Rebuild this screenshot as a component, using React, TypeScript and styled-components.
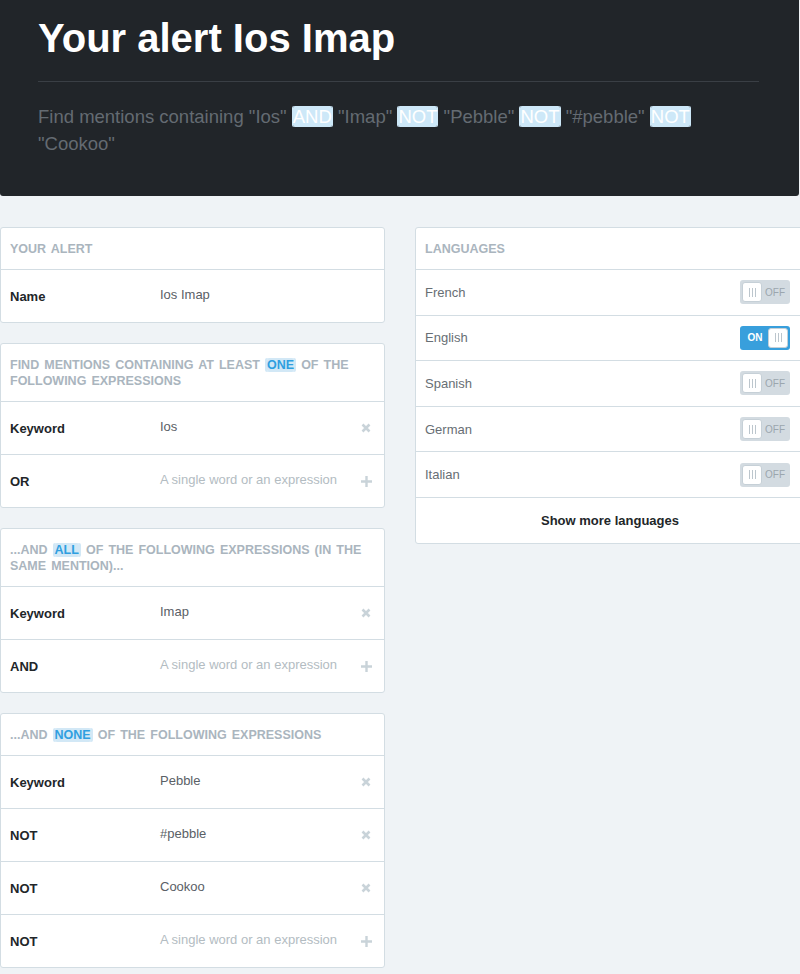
import React from "react";
import styled, { createGlobalStyle } from "styled-components";

const Global = createGlobalStyle`
  html, body { margin: 0; padding: 0; background: #eff3f6; }
  body { font-family: "Liberation Sans", Arial, sans-serif; -webkit-font-smoothing: antialiased; }
  * { box-sizing: border-box; }
`;

const Page = styled.div`
  width: 800px;
  min-height: 974px;
  background: #eff3f6;
  overflow: hidden;
`;

const Hero = styled.header`
  width: 799px;
  height: 196px;
  background: #212529;
  border-radius: 0 0 3px 3px;
  padding: 15px 40px 0 38px;
`;

const Title = styled.h1`
  margin: 0;
  font-size: 40px;
  line-height: 46px;
  font-weight: 700;
  color: #ffffff;
`;

const Divider = styled.hr`
  border: 0;
  border-top: 1px solid #3a3f45;
  margin: 20px 0 0 0;
  width: 721px;
`;

const Summary = styled.p`
  margin: 21px 0 0 0;
  font-size: 18.5px;
  line-height: 27px;
  color: #646b72;
  max-width: 690px;
`;

const Op = styled.span`
  background: #cde8f8;
  color: #ffffff;
  border-radius: 2px;
  margin: 0 1px;
  box-shadow: -1px 0 0 #cde8f8, 1px 0 0 #cde8f8;
`;

const Columns = styled.div`
  display: grid;
  grid-template-columns: 385px 390px;
  column-gap: 30px;
  align-items: start;
  padding-top: 31px;
`;

const Stack = styled.div`
  display: flex;
  flex-direction: column;
  gap: 20px;
`;

const Card = styled.section`
  background: #ffffff;
  border: 1px solid #d3dde3;
  border-radius: 3px;
`;

const CardHead = styled.div`
  padding: 13px 9px 12px 9px;
  font-size: 12.5px;
  line-height: 16px;
  word-spacing: 1.6px;
  font-weight: 700;
  color: #aab5be;
  text-transform: uppercase;
  border-bottom: 1px solid #d3dde3;
`;

const Mark = styled.span`
  background: #d2e8f6;
  color: #2f9fe0;
  border-radius: 2px;
  margin: 0 2px;
  box-shadow: -2px 0 0 #d2e8f6, 2px 0 0 #d2e8f6;
`;

const Row = styled.div<{ $last?: boolean }>`
  display: flex;
  align-items: center;
  height: ${(p) => (p.$last ? 52 : 53)}px;
  padding: 0 12px 0 9px;
  border-bottom: ${(p) => (p.$last ? "none" : "1px solid #d3dde3")};
`;

const Label = styled.div`
  width: 150px;
  font-size: 13px;
  font-weight: 700;
  color: #222629;
`;

const Value = styled.div<{ $placeholder?: boolean }>`
  flex: 1;
  font-size: 13px;
  color: ${(p) => (p.$placeholder ? "#b3bcc2" : "#5a6066")};
  position: relative;
  top: -2px;
`;

const IconBox = styled.div`
  width: 12px;
  height: 12px;
  display: flex;
  align-items: center;
  justify-content: center;
`;

const LangRow = styled.div`
  display: flex;
  align-items: center;
  justify-content: space-between;
  height: 45.6px;
  padding: 0 14px 0 9px;
  border-bottom: 1px solid #d3dde3;
`;

const LangName = styled.div`
  font-size: 13px;
  color: #676e74;
`;

const Toggle = styled.div<{ $on?: boolean }>`
  width: 50px;
  height: 24px;
  border-radius: 3px;
  background: ${(p) => (p.$on ? "#389fdc" : "#d3dbe1")};
  display: flex;
  flex-direction: ${(p) => (p.$on ? "row" : "row-reverse")};
  align-items: center;
  justify-content: space-between;
  padding: 2px;
`;

const ToggleText = styled.span<{ $on?: boolean }>`
  font-size: 10px;
  font-weight: ${(p) => (p.$on ? 700 : 400)};
  color: ${(p) => (p.$on ? "#ffffff" : "#9ba6ae")};
  flex: 1;
  text-align: center;
`;

const Knob = styled.div`
  width: 20px;
  height: 20px;
  background: #ffffff;
  border-radius: 3px;
  border: 1px solid #c6d0d7;
  display: flex;
  align-items: center;
  justify-content: center;
  gap: 2px;
`;

const Grip = styled.i`
  display: block;
  width: 1px;
  height: 9px;
  background: #bcc6cd;
`;

const ShowMore = styled.button`
  display: block;
  width: 100%;
  height: 45px;
  border: 0;
  background: transparent;
  font-family: inherit;
  font-size: 13px;
  font-weight: 700;
  color: #222629;
  cursor: pointer;
`;

const Cross = () => (
  <svg width="10" height="10" viewBox="0 0 10 10">
    <path d="M1.5 1.5 L8.5 8.5 M8.5 1.5 L1.5 8.5" stroke="#c9d3d9" strokeWidth="2.6" strokeLinecap="butt" />
  </svg>
);

const Plus = () => (
  <svg width="11" height="11" viewBox="0 0 11 11">
    <path d="M5.5 0 V11 M0 5.5 H11" stroke="#c9d3d9" strokeWidth="2.4" />
  </svg>
);

type Item = { label: string; value?: string };

const FieldRows = ({ items }: { items: Item[] }) => (
  <>
    {items.map((it, i) => (
      <Row key={i} $last={i === items.length - 1}>
        <Label>{it.label}</Label>
        <Value $placeholder={!it.value}>{it.value || "A single word or an expression"}</Value>
        <IconBox>{it.value ? <Cross /> : <Plus />}</IconBox>
      </Row>
    ))}
  </>
);

const langs = [
  { name: "French", on: false },
  { name: "English", on: true },
  { name: "Spanish", on: false },
  { name: "German", on: false },
  { name: "Italian", on: false },
];

const Switch = ({ on }: { on: boolean }) => (
  <Toggle $on={on}>
    <ToggleText $on={on}>{on ? "ON" : "OFF"}</ToggleText>
    <Knob>
      <Grip />
      <Grip />
      <Grip />
    </Knob>
  </Toggle>
);

export default function App() {
  return (
    <Page>
      <Global />
      <Hero>
        <Title>Your alert Ios Imap</Title>
        <Divider />
        <Summary>
          Find mentions containing "Ios" <Op>AND</Op> "Imap" <Op>NOT</Op> "Pebble" <Op>NOT</Op> "#pebble"{" "}
          <Op>NOT</Op> "Cookoo"
        </Summary>
      </Hero>
      <Columns>
        <Stack>
          <Card>
            <CardHead>Your alert</CardHead>
            <Row $last>
              <Label>Name</Label>
              <Value>Ios Imap</Value>
            </Row>
          </Card>
          <Card>
            <CardHead>
              Find mentions containing at least <Mark>ONE</Mark> of the following expressions
            </CardHead>
            <FieldRows items={[{ label: "Keyword", value: "Ios" }, { label: "OR" }]} />
          </Card>
          <Card>
            <CardHead>
              ...and <Mark>ALL</Mark> of the following expressions (in the same mention)...
            </CardHead>
            <FieldRows items={[{ label: "Keyword", value: "Imap" }, { label: "AND" }]} />
          </Card>
          <Card>
            <CardHead>
              ...and <Mark>NONE</Mark> of the following expressions
            </CardHead>
            <FieldRows
              items={[
                { label: "Keyword", value: "Pebble" },
                { label: "NOT", value: "#pebble" },
                { label: "NOT", value: "Cookoo" },
                { label: "NOT" },
              ]}
            />
          </Card>
        </Stack>
        <Card>
          <CardHead>Languages</CardHead>
          {langs.map((l) => (
            <LangRow key={l.name}>
              <LangName>{l.name}</LangName>
              <Switch on={l.on} />
            </LangRow>
          ))}
          <ShowMore>Show more languages</ShowMore>
        </Card>
      </Columns>
    </Page>
  );
}
